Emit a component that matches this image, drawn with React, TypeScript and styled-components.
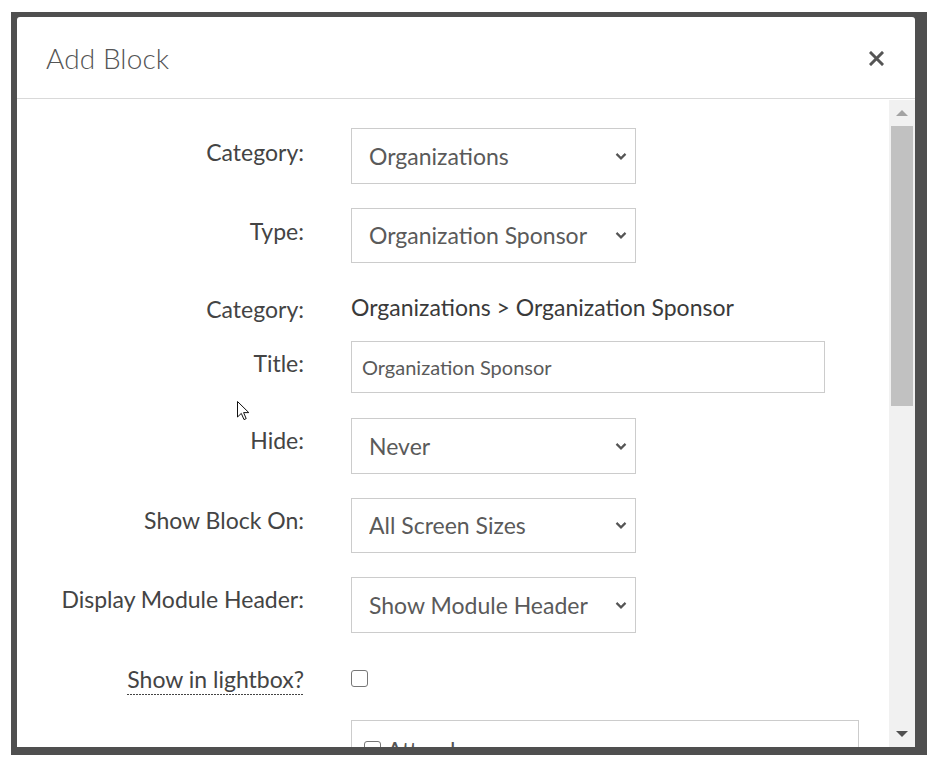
import React from 'react';
import styled, { createGlobalStyle } from 'styled-components';

const GlobalStyle = createGlobalStyle`
  html, body {
    margin: 0;
    padding: 0;
    background: #ffffff;
  }
  body {
    font-family: Lato, "Open Sans", "Liberation Sans", sans-serif;
  }
  * {
    box-sizing: border-box;
  }
`;

const Chevron = () => (
  <svg width="12" height="8" viewBox="0 0 12 8">
    <path d="M1.5 1.5 L6 6 L10.5 1.5" fill="none" stroke="#555" strokeWidth="2.2" />
  </svg>
);

const CloseIcon = () => (
  <svg width="15" height="15" viewBox="0 0 15 15">
    <path d="M2 2 L13 13 M13 2 L2 13" stroke="#555" strokeWidth="3" strokeLinecap="square" />
  </svg>
);

const CursorIcon = () => (
  <svg width="13" height="20" viewBox="0 0 13 20">
    <path
      d="M0.5 0.5 L0.5 16 L4.3 12.4 L7 18.6 L9.2 17.6 L6.6 11.6 L11.8 11.6 Z"
      fill="#fff"
      stroke="#111"
      strokeWidth="1"
      strokeLinejoin="miter"
    />
  </svg>
);

type SelectProps = { value: string };

const Select = ({ value }: SelectProps) => (
  <SelectWrap>
    <SelectBox defaultValue={value}>
      <option>{value}</option>
    </SelectBox>
    <SelectArrow>
      <Chevron />
    </SelectArrow>
  </SelectWrap>
);

export default function App() {
  return (
    <Page>
      <GlobalStyle />
      <Backdrop>
        <Modal>
          <Header>
            <Title>Add Block</Title>
            <CloseButton aria-label="Close">
              <CloseIcon />
            </CloseButton>
          </Header>
          <Body>
            <Form>
              <Row>
                <Label>Category:</Label>
                <Select value="Organizations" />
              </Row>
              <Row>
                <Label $top={8}>Type:</Label>
                <Select value="Organization Sponsor" />
              </Row>
              <Row $gap={17}>
                <Label $top={7}>Category:</Label>
                <StaticText>Organizations &gt; Organization Sponsor</StaticText>
              </Row>
              <Row $gap={25}>
                <Label $top={7}>Title:</Label>
                <TextInput defaultValue="Organization Sponsor" />
              </Row>
              <Row>
                <Label $top={7}>Hide:</Label>
                <Select value="Never" />
              </Row>
              <Row>
                <Label $top={7}>Show Block On:</Label>
                <Select value="All Screen Sizes" />
              </Row>
              <Row $gap={31}>
                <Label $top={7}>Display Module Header:</Label>
                <Select value="Show Module Header" />
              </Row>
              <Row $gap={26}>
                <Label $top={0}>
                  <HelpText>Show in lightbox?</HelpText>
                </Label>
                <CheckCell>
                  <Checkbox />
                </CheckCell>
              </Row>
              <Row>
                <span />
                <ListBox>
                  <ListItem>
                    <Checkbox />
                    <span>Attendees</span>
                  </ListItem>
                </ListBox>
              </Row>
            </Form>
            <Scrollbar>
              <ScrollArrow $dir="up" />
              <Thumb />
              <ScrollArrow $dir="down" />
            </Scrollbar>
          </Body>
        </Modal>
      </Backdrop>
      <Cursor>
        <CursorIcon />
      </Cursor>
    </Page>
  );
}

const Page = styled.div`
  position: relative;
  width: 937px;
  height: 771px;
  padding: 12px 10px 16px 11px;
  background: #ffffff;
  overflow: hidden;
`;

const Backdrop = styled.div`
  width: 916px;
  height: 743px;
  padding: 5px 12px 8px 6px;
  background: #4f4f4f;
`;

const Modal = styled.div`
  display: flex;
  flex-direction: column;
  height: 100%;
  background: #ffffff;
  border-radius: 3px 3px 0 0;
  overflow: hidden;
`;

const Header = styled.div`
  display: flex;
  align-items: center;
  justify-content: space-between;
  height: 82px;
  padding: 0 31px 0 29px;
  border-bottom: 1px solid #d9d9d9;
  flex-shrink: 0;
`;

const Title = styled.h4`
  margin: 0;
  font-size: 28px;
  font-weight: 300;
  color: #555555;
  letter-spacing: 0.1px;
`;

const CloseButton = styled.button`
  display: flex;
  padding: 0;
  border: 0;
  background: none;
  margin-top: 2px;
`;

const Body = styled.div`
  display: flex;
  flex: 1;
  min-height: 0;
`;

const Form = styled.div`
  flex: 1;
  overflow: hidden;
  padding-top: 29px;
`;

const Row = styled.div<{ $gap?: number }>`
  display: grid;
  grid-template-columns: 287px 1fr;
  column-gap: 47px;
  align-items: start;
  margin-bottom: ${(p) => p.$gap ?? 24}px;
  padding-right: 30px;
`;

const Label = styled.label<{ $top?: number }>`
  padding-top: ${(p) => p.$top ?? 9}px;
  text-align: right;
  font-size: 23px;
  line-height: 30px;
  color: #444444;
`;

const HelpText = styled.span`
  padding-bottom: 2px;
  background: repeating-linear-gradient(to right, #444 0 2px, transparent 2px 3px) left bottom / 100% 1px no-repeat;
`;

const SelectWrap = styled.div`
  position: relative;
  width: 285px;
`;

const SelectBox = styled.select`
  appearance: none;
  width: 100%;
  height: 55.5px;
  padding: 0 30px 0 17px;
  border: 1px solid #cccccc;
  border-radius: 0;
  background: #ffffff;
  font-family: inherit;
  font-size: 23px;
  color: #5a5a5a;
  outline: none;
`;

const SelectArrow = styled.span`
  position: absolute;
  right: 9px;
  top: 50%;
  transform: translateY(-45%);
  display: flex;
  pointer-events: none;
`;

const StaticText = styled.div`
  font-size: 23px;
  line-height: 30px;
  color: #3a3a3a;
  margin-top: 5px;
`;

const TextInput = styled.input`
  width: 474px;
  height: 52px;
  padding: 0 10px;
  border: 1px solid #cccccc;
  border-radius: 0;
  font-family: inherit;
  font-size: 20px;
  color: #5a5a5a;
  outline: none;
`;

const CheckCell = styled.div`
  display: flex;
  align-items: center;
  height: 30px;
`;

const Checkbox = styled.span`
  display: inline-block;
  width: 17px;
  height: 17px;
  border: 1.5px solid #777777;
  border-radius: 3px;
  background: #ffffff;
  flex-shrink: 0;
`;

const ListBox = styled.div`
  width: 508px;
  height: 140px;
  border: 1px solid #cccccc;
  padding: 15px 12px;
`;

const ListItem = styled.div`
  display: flex;
  align-items: center;
  gap: 6px;
  font-size: 23px;
  color: #555555;
`;

const Scrollbar = styled.div`
  display: flex;
  flex-direction: column;
  width: 26px;
  margin-top: 1px;
  padding: 0 2px;
  background: #f1f1f1;
  flex-shrink: 0;
`;

const ScrollArrow = styled.div<{ $dir: 'up' | 'down' }>`
  height: 26px;
  display: flex;
  align-items: center;
  justify-content: center;

  &::before {
    content: '';
    width: 0;
    height: 0;
    border-left: 6px solid transparent;
    border-right: 6px solid transparent;
    ${(p) =>
      p.$dir === 'up'
        ? 'border-bottom: 6px solid #a3a3a3;'
        : 'border-top: 6px solid #505050;'}
  }

  &:last-child {
    margin-top: auto;
  }
`;

const Thumb = styled.div`
  height: 280px;
  background: #c1c1c1;
`;

const Cursor = styled.div`
  position: absolute;
  left: 237px;
  top: 401px;
  display: flex;
  pointer-events: none;
`;
